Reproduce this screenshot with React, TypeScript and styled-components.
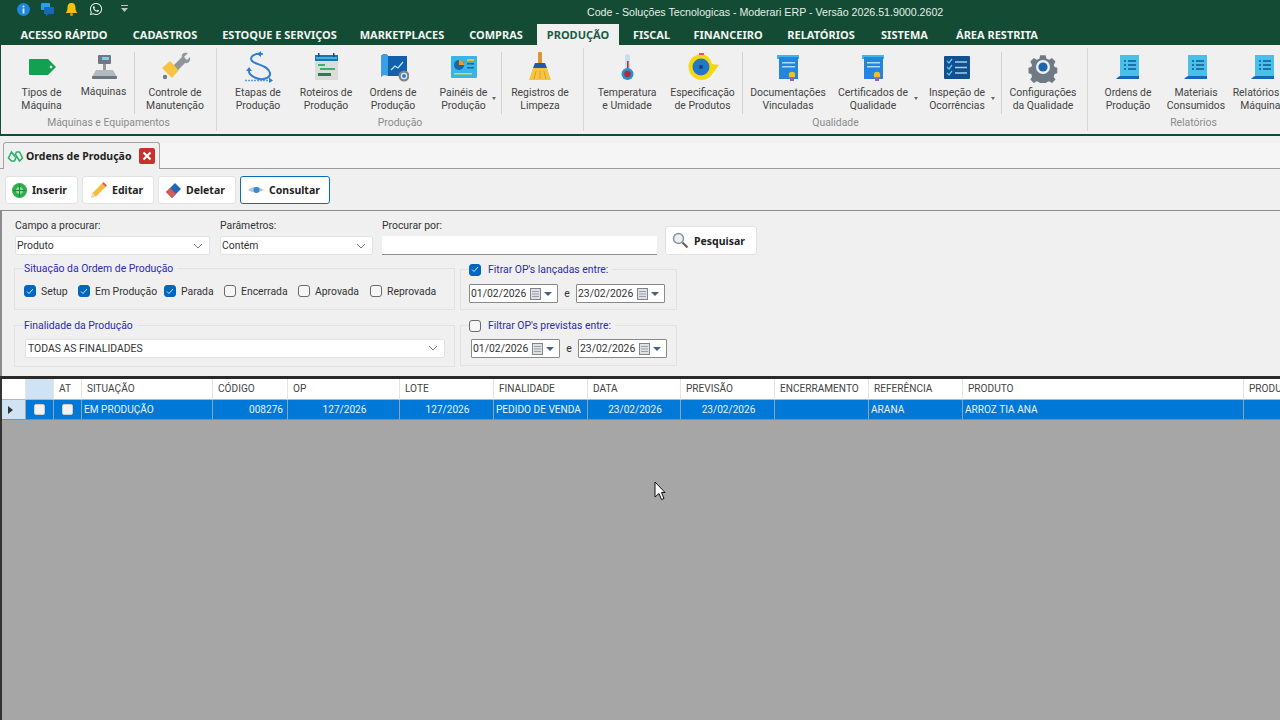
import React from "react";
import styled, { createGlobalStyle } from "styled-components";
import { FaWhatsapp } from "react-icons/fa";

const UI = `Roboto, "Liberation Sans", sans-serif`;
const BOLD = `"Noto Sans", "Liberation Sans", sans-serif`;
const TXT = "10.4px";

const Global = createGlobalStyle`
  html, body { margin: 0; padding: 0; width: 1280px; height: 720px; overflow: hidden; background: #a6a6a6; }
  #root { width: 1280px; height: 720px; }
  * { box-sizing: border-box; }
`;

const Page = styled.div`
  position: relative; width: 1280px; height: 720px; overflow: hidden;
  display: flex; flex-direction: column; font-family: ${UI}; font-size: ${TXT}; color: #222; background: #f0f0f0;
`;
const TitleBar = styled.div`
  height: 24px; flex: none; background: #134b35; display: flex; align-items: center; padding-left: 17px; color: #e6efe9;
`;
const QuickIcons = styled.div`
  width: 570px; flex: none; display: flex; align-items: center; gap: 11px; margin-top: -6px;
  svg { display: block; }
`;
const Title = styled.div` white-space: nowrap; font: 10.65px "Liberation Sans", sans-serif; margin-top: -1px; `;
const MenuBar = styled.div`
  height: 21px; flex: none; background: #134b35; display: flex; padding-left: 8px;
`;
const MenuTab = styled.div<{ $w: number; $on?: boolean }>`
  width: ${p => p.$w}px; flex: none; text-align: center; font: 700 11px/21px ${BOLD}; white-space: nowrap;
  color: ${p => (p.$on ? "#1c5a43" : "#f1f5f2")}; background: ${p => (p.$on ? "#f0f0f0" : "transparent")};
`;
const Ribbon = styled.div`
  height: 91px; flex: none; display: flex; background: #f0f0f0; border-bottom: 2px solid #134b35; border-left: 1px solid #134b35; overflow: hidden; padding-top: 3px;
`;
const RGroup = styled.div<{ $w: number; $pad: number }>`
  width: ${p => p.$w}px; flex: none; display: flex; flex-direction: column; padding-left: ${p => p.$pad}px; border-right: 1px solid #d6d6d6; height: 83px;
`;
const RItems = styled.div` display: flex; height: 68px; flex: none; `;
const RItem = styled.div<{ $w: number }>`
  width: ${p => p.$w}px; flex: none; display: flex; flex-direction: column; align-items: center; padding-top: 3px; position: relative;
  svg { display: block; flex: none; }
`;
const RLabel = styled.div<{ $up?: boolean }>`
  text-align: center; line-height: 13px; font-size: ${TXT}; color: #444; white-space: pre; margin-top: ${p => (p.$up ? 2 : 3)}px;
`;
const Caret = styled.span<{ $r: number }>`
  position: absolute; right: ${p => p.$r}px; top: 49px; width: 0; height: 0; border: 2.5px solid transparent; border-top: 3px solid #666;
`;
const RSep = styled.div` width: 1px; flex: none; height: 62px; margin-top: 4px; background: #d3d3d3; `;
const RTitle = styled.div<{ $off: number }>`
  text-align: center; font-size: ${TXT}; color: #8b8b8b; line-height: 14px; margin-left: ${p => p.$off}px;
`;
const TabBar = styled.div`
  height: 33px; flex: none; display: flex; align-items: flex-end; padding-left: 3px; border-bottom: 1px solid #9a9a9a; background: #f0f0f0;
`;
const DocTab = styled.div`
  width: 157px; height: 27px; margin-bottom: -1px; background: #f0f0f0; border: 1px solid #a4a4a4; border-bottom: none; border-radius: 3px 3px 0 0;
  display: flex; align-items: center; padding-left: 3px; gap: 2px; font: 700 10.5px ${BOLD}; color: #222; white-space: nowrap;
`;
const DocTabText = styled.span` width: 111px; flex: none; `;
const TabStrip = styled.div` flex: 1; height: 25px; background: #f5f5f5; `;
const Toolbar = styled.div` height: 41px; flex: none; display: flex; gap: 4px; padding: 7px 0 0 5px; `;
const ToolBtn = styled.button<{ $w: number; $pad: number; $on?: boolean }>`
  width: ${p => p.$w}px; height: 28px; padding: 0 0 0 ${p => p.$pad}px; display: flex; align-items: center; gap: 4px; background: #fff; font: 700 10.5px ${BOLD}; color: #222;
  border: 1px solid ${p => (p.$on ? "#0a6cb8" : "#e2e2e2")}; border-radius: 3px;
  svg { flex: none; }
`;
const Panel = styled.div`
  height: 166px; flex: none; border-top: 1px solid #8c8c8c; border-left: 2px solid #8c8c8c; padding: 8px 0 0 12px; display: flex; flex-direction: column; background: #f0f0f0;
`;
const TopRow = styled.div` display: flex; height: 37px; flex: none; `;
const Field = styled.div<{ $w: number; $ml: number }>`
  width: ${p => p.$w}px; margin-left: ${p => p.$ml}px; flex: none; display: flex; flex-direction: column;
`;
const FieldLabel = styled.div` line-height: 14px; height: 17px; font-size: ${TXT}; color: #333; `;
const Select = styled.div`
  height: 19px; background: #fff; border: 1px solid #e2e2e2; border-radius: 2px; display: flex; align-items: center; justify-content: space-between; padding: 0 6px 0 1px; font-size: ${TXT}; color: #333;
  svg { display: block; }
`;
const Input = styled.div` height: 19px; background: #fff; border-bottom: 1px solid #8f8f8f; `;
const SearchBtn = styled.button`
  width: 92px; height: 29px; margin: 7px 0 0 8px; background: #fff; border: 1px solid #e2e2e2; border-radius: 3px; font: 700 10.5px ${BOLD}; color: #222; display: flex; align-items: center; padding-left: 6px; gap: 5px; flex: none;
`;
const Columns = styled.div` display: flex; margin-top: 12px; `;
const LeftCol = styled.div` width: 441px; flex: none; display: flex; flex-direction: column; gap: 15px; `;
const RightCol = styled.div` width: 217px; flex: none; margin-left: 5px; display: flex; flex-direction: column; gap: 15px; margin-top: 1px; `;
const Box = styled.div<{ $h: number }>`
  position: relative; height: ${p => p.$h}px; border: 1px solid #e2e2e2; display: flex; align-items: center;
`;
const Legend = styled.div<{ $x: number }>`
  position: absolute; top: -7px; left: ${p => p.$x}px; background: #f0f0f0; padding: 0 4px 0 0; line-height: 13px; font-size: ${TXT}; color: #2b2bb0; display: flex; align-items: center; gap: 7px; white-space: nowrap;
`;
const Checks = styled.div` display: flex; padding: 4px 0 0 9px; `;
const CheckItem = styled.div<{ $w: number }>`
  width: ${p => p.$w}px; flex: none; display: flex; align-items: center; gap: 5px; white-space: nowrap; color: #333; font-size: ${TXT};
`;
const Check = styled.span<{ $on?: boolean }>`
  width: 12px; height: 12px; flex: none; border-radius: 3px; display: flex; align-items: center; justify-content: center;
  background: ${p => (p.$on ? "#0067c0" : "#f6f6f6")}; border: 1px solid ${p => (p.$on ? "#0067c0" : "#6b6b6b")};
  svg { display: block; }
`;
const BoxSelect = styled(Select)` width: 420px; margin: 4px 0 0 10px; padding-left: 2px; `;
const Dates = styled.div<{ $l: number; $t: number }>` display: flex; align-items: center; padding: ${p => p.$t}px 0 0 ${p => p.$l}px; gap: 6px; `;
const DateBox = styled.div`
  width: 89px; height: 19px; background: #fff; border: 1px solid #8a8a8a; border-radius: 1px; display: flex; align-items: center; padding-left: 1px; font-size: ${TXT}; color: #333; position: relative;
  svg { position: absolute; right: 3px; top: 2px; display: block; }
`;
const EText = styled.span` width: 6px; text-align: center; color: #333; `;
const Grid = styled.div`
  flex: 1; background: #a6a6a6; border-top: 3px solid #2a2a2a; border-left: 2px solid #333; font-size: 10.1px;
`;
const GridRow = styled.div<{ $h: number }>`
  display: grid; height: ${p => p.$h}px; grid-template-columns: 24px 28px 28px 131px 75px 112px 94px 94px 93px 94px 94px 94px 281px 100px;
`;
const Head = styled.div<{ $tint?: boolean }>`
  background: ${p => (p.$tint ? "#cfe3f5" : "#fff")}; border-right: 1px solid #e4e4e4; border-bottom: 1px solid #b5b5b5; line-height: 19px; padding-left: 5px; color: #444; white-space: nowrap; overflow: hidden;
`;
const Cell = styled.div<{ $right?: number; $center?: boolean }>`
  background: #0078d7; border-right: 1px solid #8fa3b5; border-bottom: 1px solid #8a8a8a; line-height: 19px; color: #eaf3fb; padding-left: 2px; white-space: nowrap; overflow: hidden;
  text-align: ${p => (p.$right !== undefined ? "right" : p.$center ? "center" : "left")}; padding-right: ${p => p.$right ?? 0}px;
`;
const IndCell = styled.div`
  background: #cfe3f5; border-right: 1px solid #a8a8a8; border-bottom: 1px solid #8a8a8a; display: flex; align-items: center; padding-left: 6px;
`;
const IndArrow = styled.span` width: 0; height: 0; border: 4px solid transparent; border-left: 5px solid #333; border-right: none; `;
const BoxCell = styled(Cell)` display: flex; align-items: center; justify-content: center; padding: 0; `;
const RowCheck = styled.span` width: 11px; height: 11px; background: #f2f2f2; border: 1px solid #ccc; border-radius: 2px; `;
const Pointer = styled.svg` position: absolute; left: 654px; top: 481px; `;

/* ---- ribbon icons: 32x32 canvas ---- */
const S = ({ children }: { children: React.ReactNode }) => (
  <svg width={32} height={32} viewBox="0 0 32 32">{children}</svg>
);
const TagIcon = () => <S><path d="M3 9a1 1 0 0 1 1-1h18l8 8-8 8H4a1 1 0 0 1-1-1z" fill="#12a150" /><circle cx="25" cy="16" r="1.4" fill="#d8f0e0" /></S>;
const ScaleIcon = () => <S>
  <rect x="10" y="4" width="13" height="9" rx="1" fill="#6d7a85" /><rect x="14" y="6" width="7" height="3" fill="#6fd6e8" />
  <rect x="15" y="13" width="3" height="6" fill="#8d98a1" /><path d="M8 19h17l4 7H4z" fill="#b4b9be" /><rect x="4" y="25" width="25" height="3" rx="1" fill="#6a7680" />
</S>;
const WrenchIcon = () => <S>
  <path d="M3 17l8-7 9 9-7 8z" fill="#f6c443" /><path d="M15 14l8-8c-1-3 2-5 6-4l-4 4 3 3 3-3c1 4-2 7-5 6l-7 7z" fill="#8e959b" />
  <circle cx="6" cy="26" r="2.2" fill="#6f7f8f" />
</S>;
const StepsIcon = () => <S>
  <path d="M20 3C12 2 7 6 10 10C14 14 26 14 28 22C29 27 20 30 14 27C9 25 6 22 7 18" fill="none" stroke="#2f7fd3" strokeWidth="2" strokeLinecap="round" />
  <path d="M19 0l-4 3 4 3zM4 20l3-4 3 4z" fill="#2f7fd3" />
  <path d="M3 29.500h25" stroke="#5a9ee0" strokeWidth="1.400" strokeDasharray="2 1" /><path d="M27 26.500l4 3-4 2.500z" fill="#2f7fd3" />
</S>;
const CalendarIcon = () => <S>
  <rect x="5" y="4" width="23" height="25" fill="#d9dedb" /><rect x="5" y="4" width="23" height="6" fill="#1a74ad" /><rect x="6" y="6" width="21" height="2" fill="#3fb0e0" />
  <rect x="8" y="2" width="1.500" height="4" fill="#12507a" /><rect x="23" y="2" width="1.500" height="4" fill="#12507a" />
  <rect x="8" y="13" width="7" height="2" fill="#37b36a" /><rect x="10" y="17" width="15" height="2" fill="#37b36a" /><rect x="8" y="22" width="13" height="3" fill="#2d7d50" />
</S>;
const BlueprintIcon = () => <S>
  <path d="M4 5c3-3 6-2 7 0h19v20H11c-2-2-5-2-7 1z" fill="#125fae" /><path d="M4 5v21c2-2 4-2 7-1V5C9 2 6 3 4 5z" fill="#3aa0e4" />
  <path d="M14 19l4-4 3 2 5-6" stroke="#bfe6fb" strokeWidth="1.200" fill="none" />
  <circle cx="27" cy="25" r="5.500" fill="#7d868e" /><circle cx="27" cy="25" r="3.200" fill="#e8edf0" /><circle cx="27" cy="25" r="2" fill="#2f7fd3" />
</S>;
const PanelIcon = () => <S>
  <rect x="3" y="5" width="26" height="22" rx="1" fill="#36b6e6" /><circle cx="11" cy="14" r="5" fill="#1a64a8" /><path d="M11 14V9a5 5 0 0 1 5 5z" fill="#f39a1e" />
  <rect x="19" y="8" width="7" height="2" fill="#f3c11e" /><rect x="19" y="12" width="7" height="1.500" fill="#1a64a8" /><rect x="19" y="16" width="7" height="1.500" fill="#1a64a8" />
  <rect x="6" y="22" width="18" height="1.500" fill="#e6d23a" />
</S>;
const BroomIcon = () => <S>
  <rect x="14" y="1" width="4" height="12" rx="1" fill="#e2952c" /><path d="M11 12h10l2 5H9z" fill="#1d5da8" /><path d="M9 17h14l4 12H5z" fill="#f6c443" />
  <path d="M12 20l-2 8M16 20v8M20 20l2 8" stroke="#e29b25" strokeWidth="1" />
</S>;
const ThermoIcon = () => <S>
  <rect x="14" y="3" width="5" height="19" rx="2.500" fill="#c5dfef" /><rect x="16" y="10" width="1.600" height="13" fill="#c03030" /><circle cx="16.500" cy="23" r="6" fill="#2a8fd0" /><circle cx="16.500" cy="23" r="3.200" fill="#b02a3a" />
</S>;
const TapeIcon = () => <S>
  <path d="M15 3a13 13 0 1 0 11 19l6-8-7-1A13 13 0 0 0 15 3z" fill="#f6d80f" /><circle cx="14" cy="16" r="8.500" fill="#2277c8" /><circle cx="14" cy="16" r="2" fill="#10456f" />
  <rect x="12" y="2" width="5" height="2" fill="#e0516a" />
</S>;
const DocIcon = () => <S>
  <rect x="5" y="4" width="22" height="4" fill="#3db6ea" /><rect x="7" y="6" width="19" height="22" fill="#2584dc" />
  <rect x="10" y="11" width="13" height="1.500" fill="#a8dcf8" /><rect x="10" y="15" width="13" height="1.500" fill="#a8dcf8" />
  <circle cx="20" cy="24" r="3.200" fill="#f3c11e" /><rect x="18" y="26" width="4" height="4" fill="#a05ad0" />
</S>;
const ChecklistIcon = () => <S>
  <rect x="3" y="5" width="26" height="23" rx="1" fill="#12508f" />
  <path d="M6 10l2 2 3-4M6 16l2 2 3-4M6 22l2 2 3-4" stroke="#5cc2f0" strokeWidth="1.300" fill="none" />
  <path d="M14 11h12M14 16.500h12M14 22h12" stroke="#9fd0ee" strokeWidth="1.600" />
</S>;
const GearIcon = () => <S>
  <path d="M13 3h6l1 4 3 1 3-2 4 4-2 4 1 2 3 1v6l-3 1-1 3 2 3-4 4-3-2-3 1-1 3h-6l-1-3-3-1-3 2-4-4 2-3-1-3-3-1v-6l3-1 1-2-2-4 4-4 3 2 3-1z" fill="#6f7a84" transform="translate(1.500 1.500) scale(.9)" />
  <circle cx="16" cy="16" r="7" fill="#eef1f3" /><circle cx="16" cy="16" r="4.600" fill="#1d63ad" />
</S>;
const ReportIcon = () => <S>
  <rect x="8" y="4" width="19" height="23" fill="#48c0ea" />
  <path d="M12 10h2M16 10h8M12 14h2M16 14h8M12 18h2M16 18h8" stroke="#0f5a92" strokeWidth="1.400" />
  <path d="M4 28h23v-3H9c-2 0-3 1-5 3z" fill="#1668b8" />
</S>;

/* ---- small icons ---- */
const InfoIcon = () => <svg width="13" height="13" viewBox="0 0 13 13"><circle cx="6.500" cy="6.500" r="6.500" fill="#1f86d8" /><rect x="5.600" y="5.500" width="1.800" height="5" fill="#cfeaff" /><circle cx="6.500" cy="3.500" r="1" fill="#cfeaff" /></svg>;
const ChatIcon = () => <svg width="13" height="13" viewBox="0 0 13 13"><rect x="0" y="0" width="9" height="7" rx="1" fill="#2aa0e8" /><rect x="3" y="4" width="10" height="7" rx="1" fill="#1668b8" /><path d="M5 11v2l3-2z" fill="#1668b8" /></svg>;
const BellIcon = () => <svg width="13" height="13" viewBox="0 0 13 13"><path d="M6.500 0c3 0 4 2 4 5 0 3 1 4 2 5H.5c1-1 2-2 2-5 0-3 1-5 4-5z" fill="#f4c20d" /><circle cx="6.500" cy="11.500" r="1.500" fill="#e09a00" /></svg>;
const QuickMenu = () => <svg width="9" height="8" viewBox="0 0 9 8" style={{ marginLeft: 6 }}><rect x="1" y="0" width="7" height="1" fill="#b9c6c0" /><path d="M1 3h7L4.500 7z" fill="#b9c6c0" /></svg>;
const Chevron = () => <svg width="10" height="6" viewBox="0 0 10 6"><path d="M1 1l4 4 4-4" fill="none" stroke="#777" /></svg>;
const Tick = () => <svg width="8" height="7" viewBox="0 0 8 7"><path d="M1 3.500l2 2 4-4.500" fill="none" stroke="#d6e8f8" strokeWidth="1" /></svg>;
const CalDrop = () => <svg width="24" height="14" viewBox="0 0 24 14"><rect x=".5" y="1.500" width="10" height="11" fill="#dfe2e5" stroke="#7f858b" /><path d="M2 4.500h7M2 7h7M2 9.500h7" stroke="#9aa0a6" /><path d="M14 5h8l-4 4z" fill="#4a6080" /></svg>;
const TabLogo = () => <svg width="17" height="14" viewBox="0 0 17 14"><path d="M1.500 9l3-6 3 4 2-4 3 0 3 6-3 3-3-5-2 5h-3z" fill="none" stroke="#2eb26b" strokeWidth="1.600" /></svg>;
const CloseRed = () => <svg width="16" height="16" viewBox="0 0 16 16"><rect width="16" height="16" rx="2" fill="#c8302d" /><path d="M4.500 4.500l7 7M11.500 4.500l-7 7" stroke="#fff" strokeWidth="2.200" /></svg>;
const GlobeIcon = () => <svg width="17" height="17" viewBox="0 0 17 17"><circle cx="8.500" cy="8.500" r="7.500" fill="#2fae4c" /><circle cx="8.500" cy="8.500" r="3.500" fill="#8ed9a0" /><path d="M8.500 2v13M2 8.500h13" stroke="#1d8b3a" /></svg>;
const PencilIcon = () => <svg width="18" height="18" viewBox="0 0 18 18"><path d="M1 17l1.500-5L12 2.500l3.500 3.500L6 15.500z" fill="#f3bd3c" /><path d="M12 2.500l1.500-1.500 3.500 3.500L15.500 6z" fill="#e2604e" /><path d="M1 17l1.500-5 3.500 3.500z" fill="#f5dcb0" /></svg>;
const EraserIcon = () => <svg width="17" height="17" viewBox="0 0 17 17"><path d="M1 10l9-9 6 6-9 9z" fill="#2168b8" /><path d="M1 10l4-4 6 6-4 4z" fill="#e2574c" /></svg>;
const EyeIcon = () => <svg width="18" height="12" viewBox="0 0 18 12"><path d="M1 6c4-4 10-4 16 0-6 3-12 3-16 0z" fill="#b5c6d6" /><circle cx="9.500" cy="6" r="3" fill="#3a86cf" /></svg>;
const LensIcon = () => <svg width="17" height="17" viewBox="0 0 17 17"><circle cx="6.500" cy="6.500" r="5" fill="#e6f0f6" stroke="#8a9299" strokeWidth="1.400" /><path d="M10.500 10.500l5 5" stroke="#6a625a" strokeWidth="2.200" /></svg>;

type It = { w: number; i: React.ReactNode; t: string; caret?: number; up?: boolean } | "sep";
const ribbon: { w: number; pad: number; items: It[]; title: string }[] = [
  { w: 216, pad: 9, items: [
    { w: 63, i: <TagIcon />, t: "Tipos de\nMáquina" }, { w: 61, i: <ScaleIcon />, t: "Máquinas", up: true }, "sep",
    { w: 80, i: <WrenchIcon />, t: "Controle de\nManutenção" } ], title: "Máquinas e Equipamentos" },
  { w: 367, pad: 7, items: [
    { w: 68, i: <StepsIcon />, t: "Etapas de\nProdução" }, { w: 68, i: <CalendarIcon />, t: "Roteiros de\nProdução" },
    { w: 66, i: <BlueprintIcon />, t: "Ordens de\nProdução" }, { w: 75, i: <PanelIcon />, t: "Painéis de\nProdução", caret: 5.5 }, "sep",
    { w: 76, i: <BroomIcon />, t: "Registros de\nLimpeza" } ], title: "Produção" },
  { w: 504, pad: 7, items: [
    { w: 72, i: <ThermoIcon />, t: "Temperatura\ne Umidade" }, { w: 79, i: <TapeIcon />, t: "Especificação\nde Produtos" }, "sep",
    { w: 90, i: <DocIcon />, t: "Documentações\nVinculadas" }, { w: 80, i: <DocIcon />, t: "Certificados de\nQualidade", caret: -4.5 },
    { w: 88, i: <ChecklistIcon />, t: "Inspeção de\nOcorrências", caret: 6.5 }, "sep", { w: 82, i: <GearIcon />, t: "Configurações\nda Qualidade" } ], title: "Qualidade" },
  { w: 212, pad: 6, items: [
    { w: 68, i: <ReportIcon />, t: "Ordens de\nProdução" }, { w: 68, i: <ReportIcon />, t: "Materiais\nConsumidos" }, { w: 66, i: <ReportIcon />, t: "Relatórios de\nMáquinas" } ], title: "Relatórios" },
];

const menu: [string, number][] = [["ACESSO RÁPIDO", 112], ["CADASTROS", 90], ["ESTOQUE E SERVIÇOS", 139], ["MARKETPLACES", 106], ["COMPRAS", 82], ["PRODUÇÃO", 82], ["FISCAL", 65], ["FINANCEIRO", 88], ["RELATÓRIOS", 98], ["SISTEMA", 69], ["ÁREA RESTRITA", 116]];

const checks: [string, boolean, number][] = [["Setup", true, 54], ["Em Produção", true, 86], ["Parada", true, 60], ["Encerrada", false, 74], ["Aprovada", false, 72], ["Reprovada", false, 70]];

const heads = ["SITUAÇÃO", "CÓDIGO", "OP", "LOTE", "FINALIDADE", "DATA", "PREVISÃO", "ENCERRAMENTO", "REFERÊNCIA", "PRODUTO", "PRODU"];

export default function App() {
  return (
    <Page>
      <Global />
      <TitleBar>
        <QuickIcons>
          <InfoIcon /><ChatIcon /><BellIcon />
          <FaWhatsapp size={14} color="#dff5e6" />
          <QuickMenu />
        </QuickIcons>
        <Title>Code - Soluções Tecnologicas - Moderari ERP - Versão 2026.51.9000.2602</Title>
      </TitleBar>
      <MenuBar>
        {menu.map(([t, w]) => <MenuTab key={t} $w={w} $on={t === "PRODUÇÃO"}>{t}</MenuTab>)}
      </MenuBar>
      <Ribbon>
        {ribbon.map(g => (
          <RGroup key={g.title} $w={g.w} $pad={g.pad}>
            <RItems>
              {g.items.map((it, n) =>
                it === "sep" ? <RSep key={n} /> : (
                  <RItem key={n} $w={it.w}>
                    {it.i}
                    <RLabel $up={it.up}>{it.t}</RLabel>
                    {it.caret !== undefined && <Caret $r={it.caret} />}
                  </RItem>
                ))}
            </RItems>
            <RTitle $off={-g.pad}>{g.title}</RTitle>
          </RGroup>
        ))}
      </Ribbon>
      <TabBar>
        <DocTab><TabLogo /><DocTabText>Ordens de Produção</DocTabText><CloseRed /></DocTab>
        <TabStrip />
      </TabBar>
      <Toolbar>
        <ToolBtn $w={73} $pad={5}><GlobeIcon />Inserir</ToolBtn>
        <ToolBtn $w={72} $pad={7}><PencilIcon />Editar</ToolBtn>
        <ToolBtn $w={78} $pad={6}><EraserIcon />Deletar</ToolBtn>
        <ToolBtn $w={90} $pad={6} $on><EyeIcon />Consultar</ToolBtn>
      </Toolbar>
      <Panel>
        <TopRow>
          <Field $w={195} $ml={1}><FieldLabel>Campo a procurar:</FieldLabel><Select>Produto<Chevron /></Select></Field>
          <Field $w={153} $ml={10}><FieldLabel>Parâmetros:</FieldLabel><Select>Contém<Chevron /></Select></Field>
          <Field $w={275} $ml={9}><FieldLabel>Procurar por:</FieldLabel><Input /></Field>
          <SearchBtn><LensIcon />Pesquisar</SearchBtn>
        </TopRow>
        <Columns>
          <LeftCol>
            <Box $h={42}>
              <Legend $x={9}>Situação da Ordem de Produção</Legend>
              <Checks>
                {checks.map(([t, on, w]) => (
                  <CheckItem key={t} $w={w}><Check $on={on}>{on && <Tick />}</Check>{t}</CheckItem>
                ))}
              </Checks>
            </Box>
            <Box $h={42}>
              <Legend $x={9}>Finalidade da Produção</Legend>
              <BoxSelect>TODAS AS FINALIDADES<Chevron /></BoxSelect>
            </Box>
          </LeftCol>
          <RightCol>
            <Box $h={41}>
              <Legend $x={8}><Check $on><Tick /></Check>Fitrar OP's lançadas entre:</Legend>
              <Dates $l={8} $t={7}>
                <DateBox>01/02/2026<CalDrop /></DateBox><EText>e</EText><DateBox>23/02/2026<CalDrop /></DateBox>
              </Dates>
            </Box>
            <Box $h={41}>
              <Legend $x={8}><Check />Filtrar OP's previstas entre:</Legend>
              <Dates $l={10} $t={5}>
                <DateBox>01/02/2026<CalDrop /></DateBox><EText>e</EText><DateBox>23/02/2026<CalDrop /></DateBox>
              </Dates>
            </Box>
          </RightCol>
        </Columns>
      </Panel>
      <Grid>
        <GridRow $h={21}>
          <Head /><Head $tint /><Head>AT</Head>
          {heads.map(h => <Head key={h}>{h}</Head>)}
        </GridRow>
        <GridRow $h={20}>
          <IndCell><IndArrow /></IndCell>
          <BoxCell><RowCheck /></BoxCell><BoxCell><RowCheck /></BoxCell>
          <Cell>EM PRODUÇÃO</Cell>
          <Cell $right={4}>008276</Cell>
          <Cell $center>127/2026</Cell>
          <Cell $center>127/2026</Cell>
          <Cell>PEDIDO DE VENDA</Cell>
          <Cell $center>23/02/2026</Cell>
          <Cell $center>23/02/2026</Cell>
          <Cell />
          <Cell>ARANA</Cell>
          <Cell>ARROZ TIA ANA</Cell>
          <Cell />
        </GridRow>
      </Grid>
      <Pointer width="12" height="20" viewBox="0 0 12 20">
        <path d="M1 1v15l4-3.500 2.500 6 2.500-1-2.500-6H11z" fill="#fff" stroke="#111" strokeWidth="1" />
      </Pointer>
    </Page>
  );
}
